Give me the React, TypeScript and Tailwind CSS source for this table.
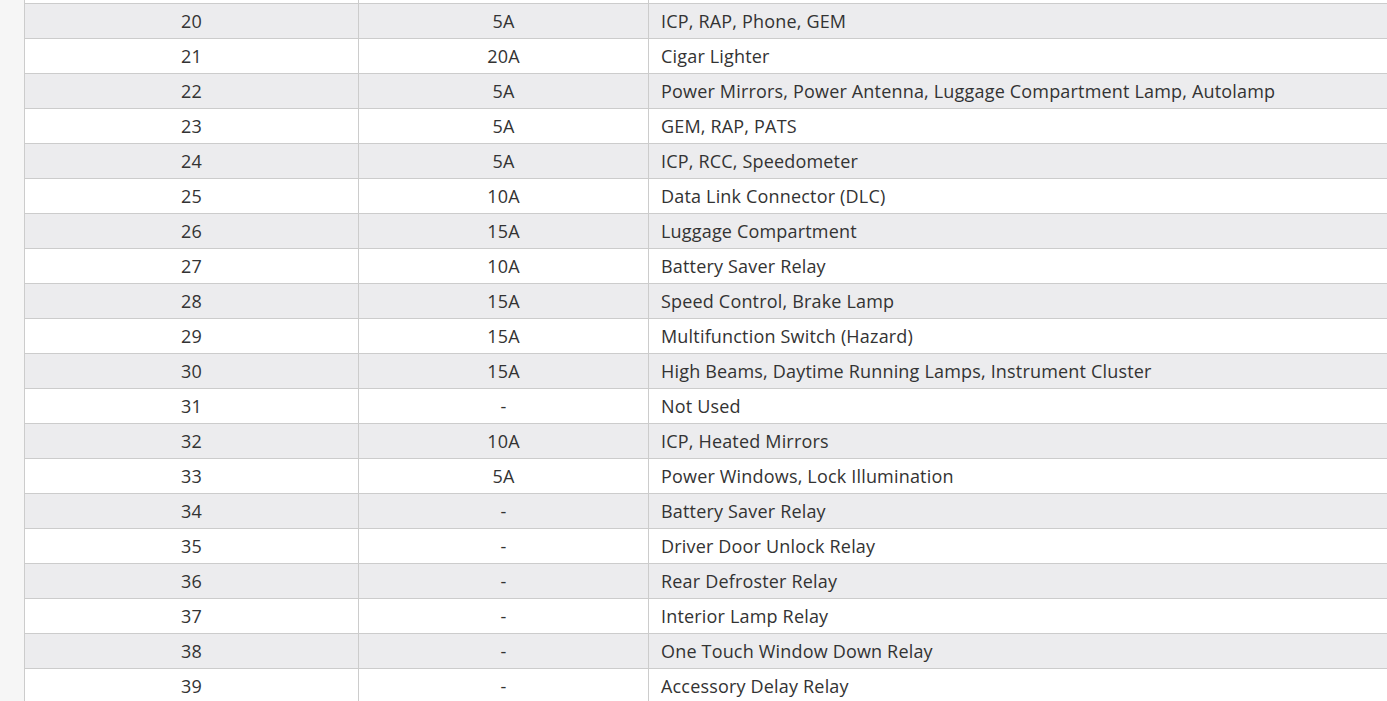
const rows: [string, string, string][] = [
  ["", "", ""],
  ["20", "5A", "ICP, RAP, Phone, GEM"],
  ["21", "20A", "Cigar Lighter"],
  ["22", "5A", "Power Mirrors, Power Antenna, Luggage Compartment Lamp, Autolamp"],
  ["23", "5A", "GEM, RAP, PATS"],
  ["24", "5A", "ICP, RCC, Speedometer"],
  ["25", "10A", "Data Link Connector (DLC)"],
  ["26", "15A", "Luggage Compartment"],
  ["27", "10A", "Battery Saver Relay"],
  ["28", "15A", "Speed Control, Brake Lamp"],
  ["29", "15A", "Multifunction Switch (Hazard)"],
  ["30", "15A", "High Beams, Daytime Running Lamps, Instrument Cluster"],
  ["31", "-", "Not Used"],
  ["32", "10A", "ICP, Heated Mirrors"],
  ["33", "5A", "Power Windows, Lock Illumination"],
  ["34", "-", "Battery Saver Relay"],
  ["35", "-", "Driver Door Unlock Relay"],
  ["36", "-", "Rear Defroster Relay"],
  ["37", "-", "Interior Lamp Relay"],
  ["38", "-", "One Touch Window Down Relay"],
  ["39", "-", "Accessory Delay Relay"],
]

export default function App() {
  return (
    <div className="flex h-[701px] overflow-hidden bg-white font-['Open_Sans',sans-serif] text-[18px] tracking-[0.01em] text-[#333]">
      <div className="w-[24px] shrink-0 bg-[#f6f6f6]" />
      <div className="-mt-[31px] flex-1 border-l border-[#cccccc]">
        {rows.map(([n, amp, desc], i) => (
          <div
            key={i}
            className={`grid h-[35px] grid-cols-[334px_290px_1fr] border-b border-[#cccccc] ${
              i % 2 === 1 ? "bg-[#ececee]" : "bg-white"
            }`}
          >
            <div className="flex items-center justify-center border-r border-[#cccccc]">{n}</div>
            <div className="flex items-center justify-center border-r border-[#cccccc]">{amp}</div>
            <div className="flex items-center pl-[12px]">{desc}</div>
          </div>
        ))}
      </div>
    </div>
  )
}
